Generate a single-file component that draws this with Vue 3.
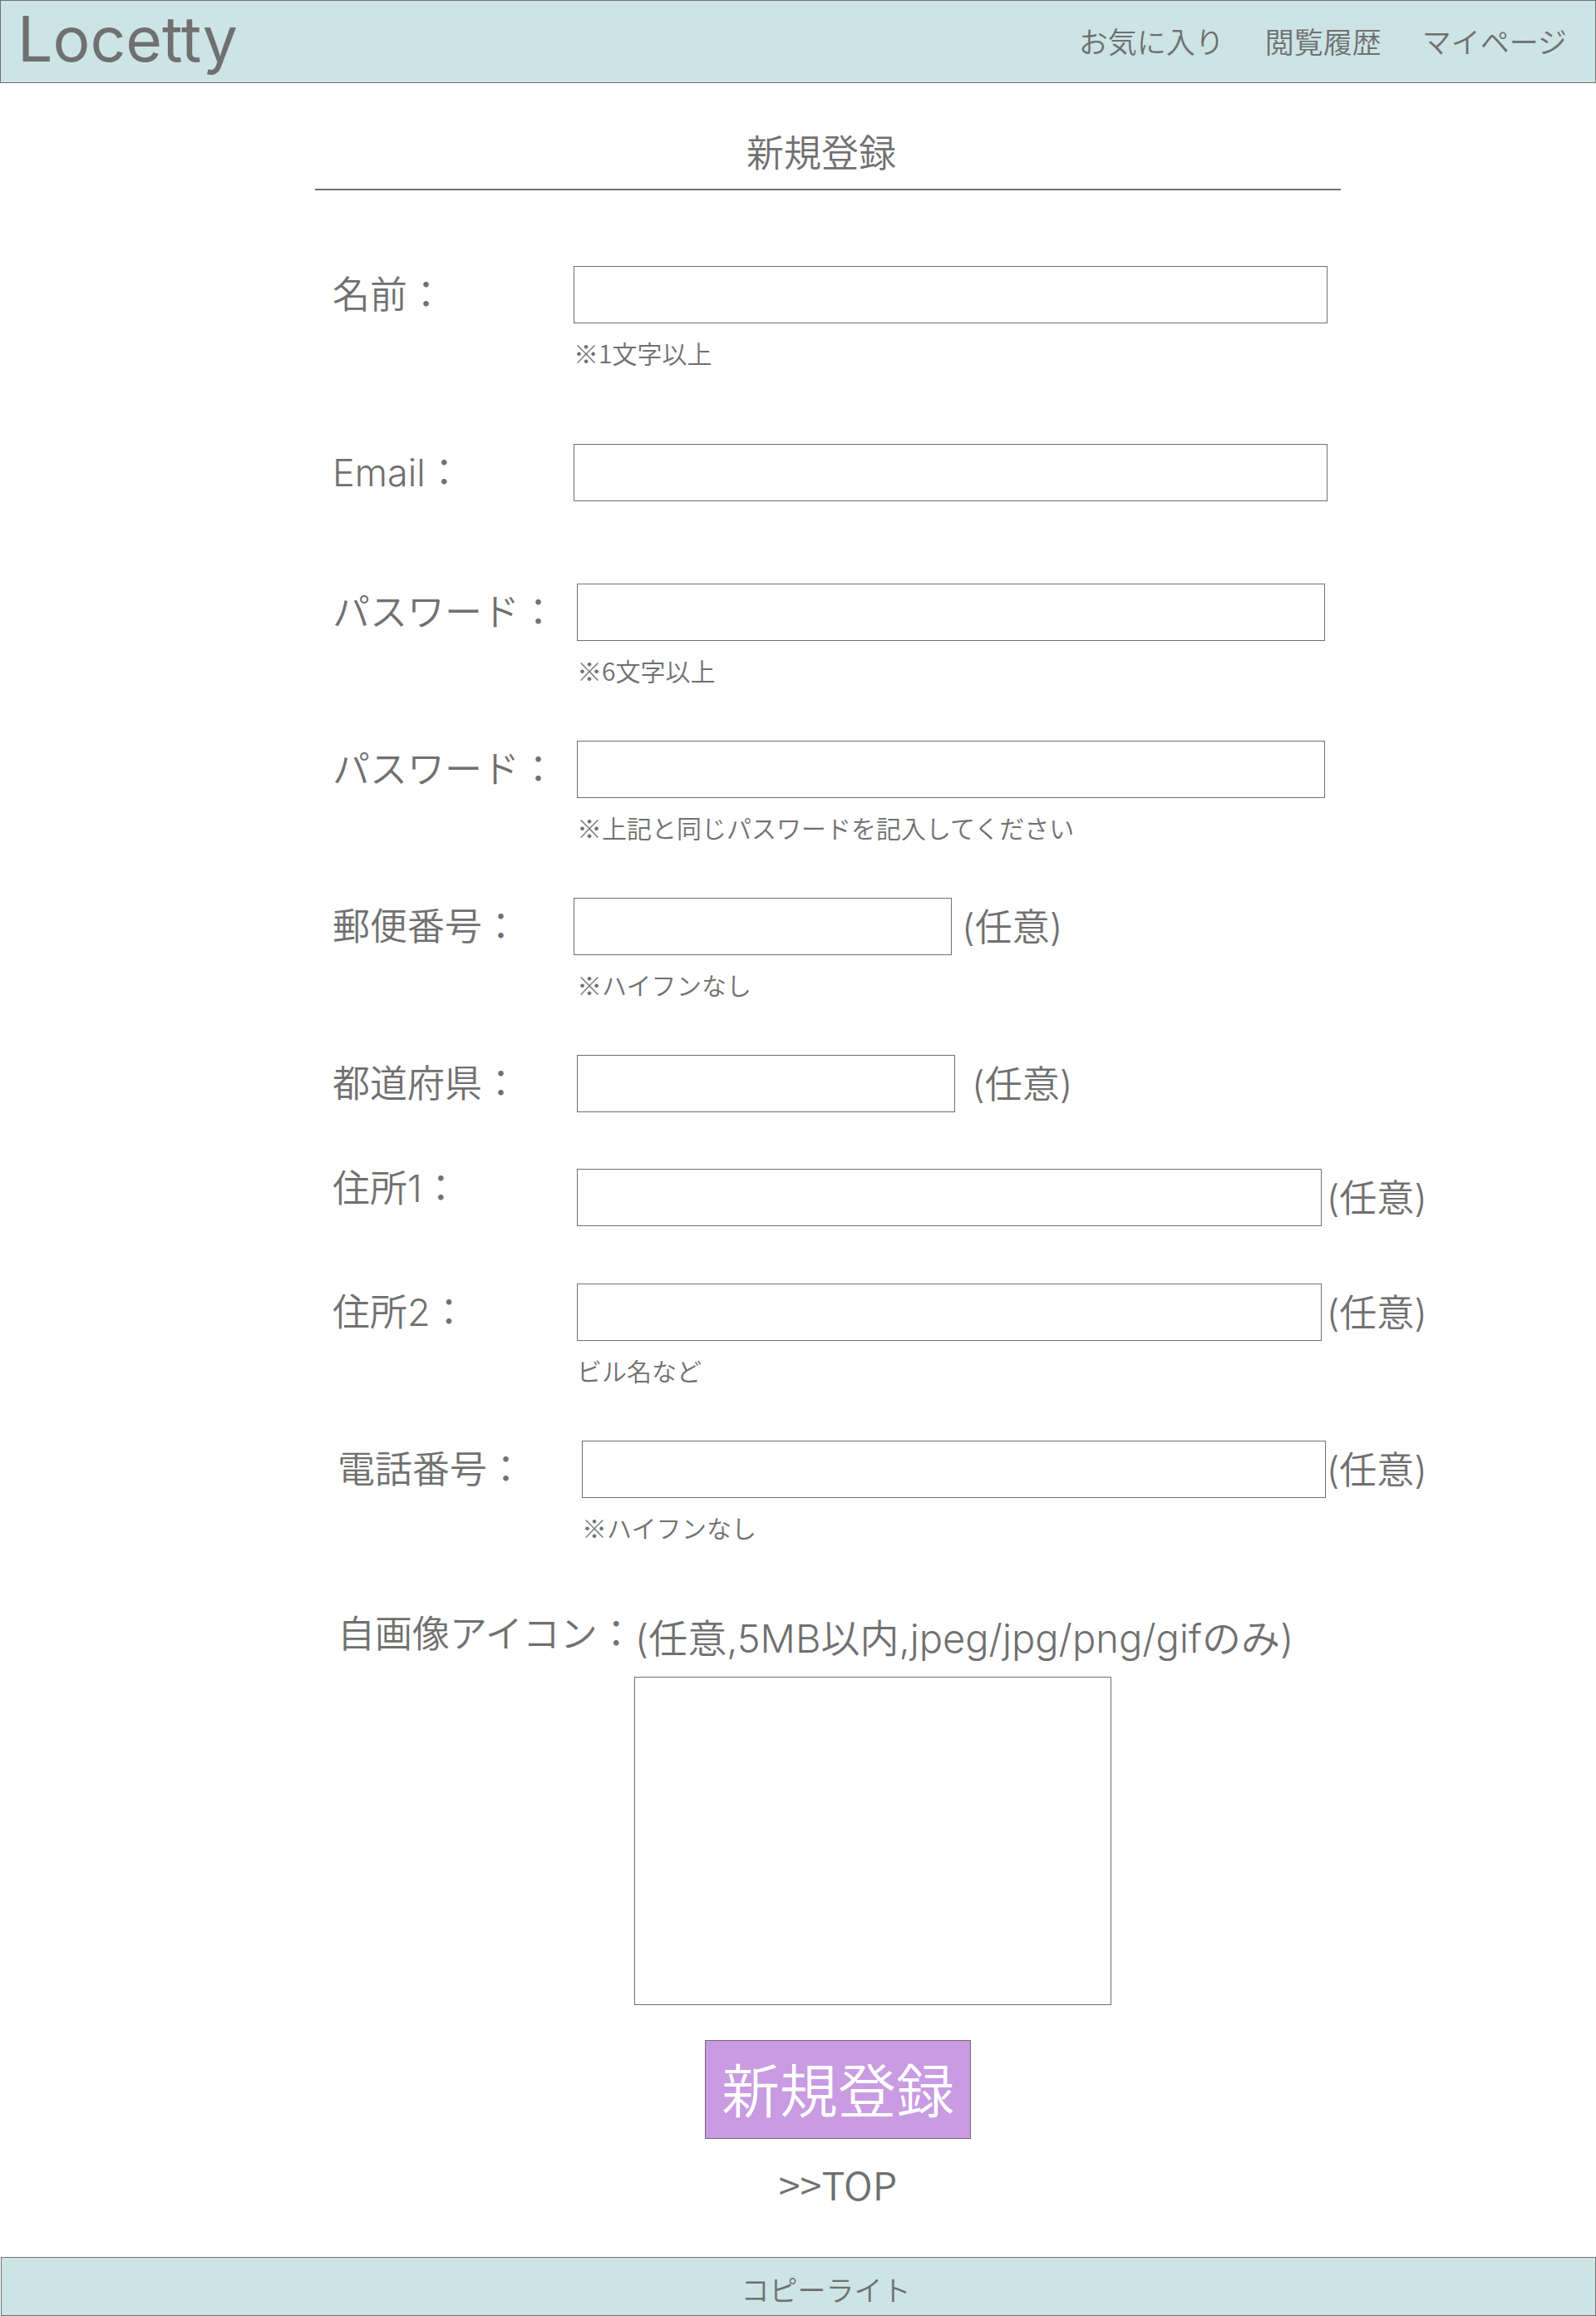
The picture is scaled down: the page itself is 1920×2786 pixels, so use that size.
<script setup>
const fields = [
  { id: 'name', label: '名前：', type: 'text', size: 'full', row: 'tight gap-large', note: '※1文字以上' },
  { id: 'email', label: 'Email：', type: 'email', size: 'full', row: 'tight gap-wide' },
  { id: 'password', label: 'パスワード：', type: 'password', size: 'long', note: '※6文字以上' },
  { id: 'password-confirm', label: 'パスワード：', type: 'password', size: 'long', note: '※上記と同じパスワードを記入してください' },
  { id: 'postal', label: '郵便番号：', type: 'text', size: 'short', row: 'tight', optional: true, note: '※ハイフンなし' },
  { id: 'prefecture', label: '都道府県：', type: 'text', size: 'short', row: 'spaced', optional: true },
  { id: 'address1', label: '住所1：', type: 'text', size: 'long', row: 'top', optional: true },
  { id: 'address2', label: '住所2：', type: 'text', size: 'long', optional: true, note: 'ビル名など' },
  { id: 'phone', label: '電話番号：', type: 'tel', size: 'long', row: 'inset', optional: true, note: '※ハイフンなし' },
]
</script>

<template>
  <div class="page">
    <header class="header">
      <a class="logo" href="#">Locetty</a>
      <nav class="nav">
        <a href="#">お気に入り</a>
        <a href="#">閲覧履歴</a>
        <a href="#">マイページ</a>
      </nav>
    </header>

    <main class="main">
      <div class="content">
        <h1 class="title">新規登録</h1>
        <form class="form" @submit.prevent>
          <div v-for="f in fields" :key="f.id" class="field" :class="f.row">
            <div class="line">
              <label class="label" :for="f.id">{{ f.label }}</label>
              <input :id="f.id" class="input" :class="f.size" :type="f.type">
              <span v-if="f.optional" class="optional">(任意)</span>
            </div>
            <p v-if="f.note" class="note">{{ f.note }}</p>
          </div>

          <div class="upload">
            <div class="upload-head">
              <label class="upload-label" for="icon">自画像アイコン：</label>
              <span class="upload-hint">(任意,5MB以内,jpeg/jpg/png/gifのみ)</span>
            </div>
            <label class="drop">
              <input id="icon" class="file" type="file" accept=".jpeg,.jpg,.png,.gif" aria-label="自画像アイコン">
            </label>
          </div>

          <div class="actions">
            <button class="submit" type="submit">新規登録</button>
            <a class="top-link" href="#">&gt;&gt;TOP</a>
          </div>
        </form>
      </div>
    </main>

    <footer class="footer">コピーライト</footer>
  </div>
</template>

<style>
body {
  margin: 0;
  background: #fff;
}
</style>

<style scoped>
.page {
  color: #707070;
  font-family: "Noto Sans CJK JP", sans-serif;
  font-size: 45px;
  font-weight: 350;
}
.page * {
  box-sizing: border-box;
}
a {
  color: inherit;
  text-decoration: none;
}
.logo,
.label,
.optional,
.upload-label,
.upload-hint {
  font-family: Inter, "Noto Sans CJK JP", sans-serif;
}
.header {
  display: flex;
  justify-content: space-between;
  height: 100px;
  padding: 0 34px 0 20px;
  background: #cce4e5;
  border: 1px solid #707070;
}
.logo {
  font-size: 75px;
  font-weight: 400;
  line-height: 92px;
}
.nav {
  display: flex;
  gap: 49px;
  font-size: 35px;
  line-height: 96px;
  white-space: nowrap;
}
.main {
  display: grid;
  grid-template-columns: 379fr minmax(0, 1338px) 203fr;
}
.content {
  grid-column: 2;
}
.title {
  max-width: 1234px;
  height: 129px;
  margin: 0;
  padding: 48px 16px 0 0;
  border-bottom: 2px solid #707070;
  font-size: 45px;
  font-weight: inherit;
  line-height: 68px;
  text-align: center;
}
.form {
  padding: 91px 0 0 21px;
}
.field {
  margin-bottom: 68px;
}
.gap-large {
  margin-bottom: 93px;
}
.gap-wide {
  margin-bottom: 99px;
}
.top {
  margin-bottom: 69px;
}
.line {
  display: flex;
  height: 69px;
}
.label {
  flex: 0 0 294px;
  line-height: 70px;
  white-space: nowrap;
}
.tight .label {
  flex-basis: 290px;
}
.top .label {
  line-height: 48px;
}
.input {
  min-width: 0;
  height: 69px;
  margin: 0;
  padding: 0 12px;
  background: #fff;
  border: 1px solid #707070;
  border-radius: 0;
  color: inherit;
  font: inherit;
}
.full {
  flex: 0 1 907px;
}
.long {
  flex: 0 1 900px;
}
.short {
  flex: 0 1 455px;
}
.optional {
  margin-left: 6px;
  line-height: 71px;
  white-space: nowrap;
}
.short + .optional {
  margin-left: 12px;
}
.spaced .short + .optional {
  margin-left: 20px;
}
.note {
  height: 52px;
  margin: 0;
  padding-left: 294px;
  font-size: 30px;
  line-height: 70px;
  white-space: nowrap;
}
.gap-large .note {
  padding-left: 290px;
}
.inset,
.upload {
  padding-left: 6px;
}
.inset .optional {
  margin-left: 1px;
}
.upload-head {
  display: flex;
  align-items: flex-start;
  height: 95px;
  white-space: nowrap;
}
.upload-label {
  flex: 0 0 357px;
  line-height: 88px;
}
.upload-hint {
  font-size: 47px;
  line-height: 97px;
}
.drop {
  display: block;
  max-width: 574px;
  height: 395px;
  margin-left: 357px;
  overflow: hidden;
  background: #fff;
  border: 1px solid #707070;
}
.file {
  width: 100%;
  height: 100%;
  opacity: 0;
}
.actions {
  display: flex;
  flex-direction: column;
  align-items: center;
  max-width: 1216px;
  padding-top: 42px;
}
.submit {
  width: 320px;
  height: 119px;
  padding: 0 0 4px;
  background: #c99be2;
  border: 1px solid #707070;
  color: #fff;
  font-family: inherit;
  font-size: 70px;
  font-weight: inherit;
  line-height: 109px;
}
.top-link {
  margin-bottom: 34px;
  font-size: 47px;
  line-height: 108px;
}
.footer {
  height: 71px;
  margin-left: 1px;
  padding: 7px 0 0 66px;
  background: #cce4e5;
  border: 1px solid #707070;
  font-size: 34px;
  line-height: 62px;
  text-align: center;
}
</style>
